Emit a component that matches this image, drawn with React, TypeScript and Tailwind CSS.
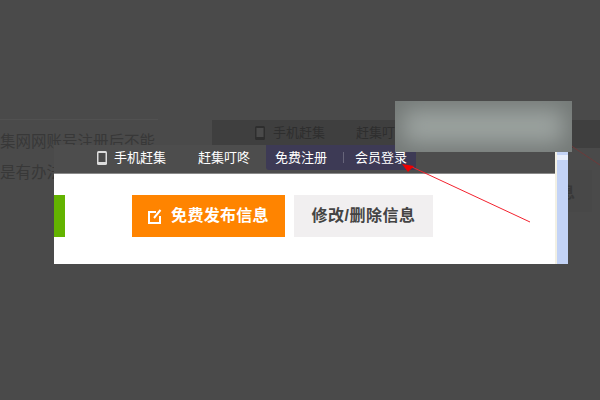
import React from 'react';

const CJK = 'font-["Liberation_Sans","Noto_Sans_CJK_SC",sans-serif]';

function PhoneIcon({ className }: { className?: string }) {
  return (
    <svg viewBox="0 0 10 14" className={className} fill="none">
      <rect x="0" y="0" width="10" height="14" rx="1.5" fill="currentColor" />
      <rect x="1.5" y="2" width="7" height="9" fill="#4a4a4a" />
    </svg>
  );
}

function EditIcon() {
  return (
    <svg viewBox="0 0 14 15" className="w-[14px] h-[15px]" fill="none" stroke="white" strokeWidth="2">
      <path d="M8 3H1V14H12V7" />
      <path d="M6 9L12.5 1" />
    </svg>
  );
}

export default function App() {
  return (
    <div className={`relative w-[600px] h-[400px] overflow-hidden bg-[#4a4a4a] ${CJK}`}>
      {/* page dimmed behind the popup */}
      <div className="absolute left-0 top-[119px] w-[158px] h-px bg-[#515151]" />
      <div className="absolute left-0 top-[131px] w-[170px] flex flex-col gap-[9px] text-[15.5px] leading-[22px] text-[#383838] whitespace-nowrap">
        <span>集网网账号注册后不能</span>
        <span>是有办法</span>
      </div>
      <div className="absolute left-[212px] top-[120px] w-[388px] h-[28px] pb-[3px] bg-[#3f3f3f] flex items-center pl-[43px] gap-[31px] text-[13px] text-[#2e2e2e]">
        <span className="flex items-center gap-[8px]">
          <PhoneIcon className="w-[10px] h-[14px] text-[#2e2e2e]" />
          手机赶集
        </span>
        <span>赶集叮咚</span>
      </div>
      <div className="absolute left-[556px] top-[170px] w-[36px] h-[42px] flex items-center pl-[3px] pt-[4px] text-[16px] font-bold text-[#383838] bg-[#484848]">
        息
      </div>
      <svg className="absolute left-[570px] top-[145px]" width="30" height="25" viewBox="0 0 30 25">
        <path d="M0 0L30 20" stroke="#6d3a3a" strokeWidth="1" />
      </svg>

      {/* popup screenshot */}
      <div className="absolute left-[54px] top-[145px] w-[514px] h-[119px] flex">
        <div className="w-[501px] flex flex-col">
          <div className="h-[26px] pb-[2px] box-content bg-[#4d4d4d] border-b border-[#8a8a8a] flex items-center text-[13px] text-white whitespace-nowrap">
            <PhoneIcon className="w-[10px] h-[14px] ml-[43px] text-[#dcdcdc]" />
            <span className="ml-[7px]">手机赶集</span>
            <span className="ml-[32px]">赶集叮咚</span>
            <div className="ml-[16px] w-[150px] h-[25px] self-start bg-[#3d3a55] rounded-b-[3px] flex items-center pl-[9px]">
              <span>免费注册</span>
              <span className="ml-[16px] mr-[11px] w-px h-[11px] bg-[#67657a]" />
              <span>会员登录</span>
            </div>
          </div>
          <div className="flex-1 bg-white pt-[21px] flex items-start">
            <div className="w-[11px] h-[42px] bg-[#63b300]" />
            <div className="ml-[67px] w-[153px] h-[42px] bg-[#ff8400] flex items-center justify-center gap-[9px] text-[16px] tracking-[0.3px] font-bold text-white">
              <EditIcon />
              免费发布信息
            </div>
            <div className="ml-[9px] w-[139px] h-[42px] bg-[#f1eff0] flex items-center justify-center text-[16px] tracking-[0.5px] font-bold text-[#444444]">
              修改/删除信息
            </div>
          </div>
        </div>
        <div className="w-[13px] mt-[7px] border-l-[2px] border-[#f2f0e4] bg-[#c3d3f6] flex flex-col pt-[3px]">
          <div className="h-[5px] bg-[#e8eefc]" />
        </div>
      </div>

      {/* red arrow annotation */}
      <svg className="absolute left-[400px] top-[160px]" width="135" height="65" viewBox="0 0 135 65">
        <path d="M12 7L130 62" stroke="#f3222e" strokeWidth="1" />
        <path d="M2 4L14 6L8 12Z" fill="#f00000" />
      </svg>

      {/* blurred patch */}
      <div className="absolute left-[395px] top-[101px] w-[177px] h-[51px] bg-[#9ca3a0] shadow-[inset_0_0_22px_8px_#737876]" />
    </div>
  );
}
